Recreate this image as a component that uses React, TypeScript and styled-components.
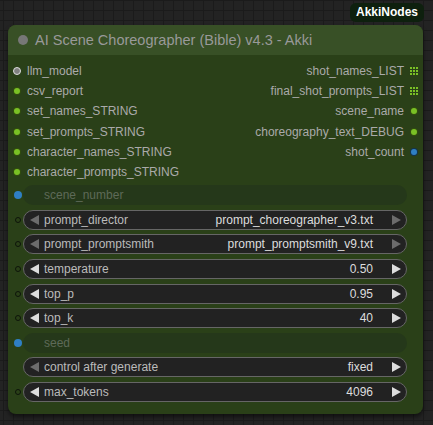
import React from "react";
import styled, { createGlobalStyle } from "styled-components";

const Global = createGlobalStyle`
  html, body { margin: 0; padding: 0; background: #222; }
  body { font-family: "Liberation Sans", Arial, sans-serif; }
`;

const Canvas = styled.div`
  position: relative;
  width: 433px;
  height: 425px;
  overflow: hidden;
  box-sizing: border-box;
  padding: 25px 10px 0 8px;
  background-color: #232323;
  background-image:
    linear-gradient(#1b1b1b 1px, transparent 1px),
    linear-gradient(90deg, #1b1b1b 1px, transparent 1px);
  background-size: 10px 10px;
  background-position: 3px 0px;
`;

const Badge = styled.div`
  position: absolute;
  top: 3px;
  left: 350px;
  height: 19px;
  padding: 0 6px;
  border-radius: 6px;
  background: #0e200e;
  color: #fff;
  font-size: 12px;
  font-weight: bold;
  line-height: 19px;
`;

const Node = styled.div`
  width: 415px;
  border-radius: 8px;
  background: #2a4018;
  box-shadow: 0 3px 4px rgba(0, 0, 0, 0.5);
  overflow: hidden;
`;

const Title = styled.div`
  height: 30px;
  background: #385026;
  display: flex;
  align-items: center;
  padding-left: 10px;
  gap: 7px;
  color: #999;
  font-size: 14.5px;
`;

const TitleDot = styled.span`
  width: 10px;
  height: 10px;
  border-radius: 50%;
  background: #777;
`;

const Body = styled.div`
  padding: 6px 16px 12px 0;
  display: flex;
  flex-direction: column;
`;

const Slots = styled.div`
  display: flex;
  justify-content: space-between;
  margin-bottom: 3px;
`;

const Column = styled.div<{ $right?: boolean }>`
  display: flex;
  flex-direction: column;
  align-items: ${(p) => (p.$right ? "flex-end" : "flex-start")};
  margin-right: ${(p) => (p.$right ? "-11px" : "0")};
`;

const SlotRow = styled.div<{ $right?: boolean }>`
  height: 20.2px;
  display: flex;
  align-items: center;
  flex-direction: ${(p) => (p.$right ? "row-reverse" : "row")};
  gap: 6px;
  padding-left: ${(p) => (p.$right ? "0" : "5px")};
  color: #aaa;
  font-size: 12px;
`;

const Dot = styled.span<{ $color: string; $ring?: boolean }>`
  width: 8px;
  height: 8px;
  border-radius: 50%;
  background: ${(p) => p.$color};
  box-sizing: border-box;
  border: ${(p) => (p.$ring ? "1.5px solid #ddd" : "1px solid rgba(0,0,0,0.6)")};
  flex: none;
`;

const GridIcon = styled.span`
  width: 8px;
  height: 8px;
  display: grid;
  grid-template-columns: repeat(3, 2px);
  grid-template-rows: repeat(3, 2px);
  gap: 1px;
  flex: none;
  & > i {
    background: #7ac025;
  }
`;

const Widgets = styled.div`
  display: flex;
  flex-direction: column;
  gap: 4.6px;
`;

const WidgetRow = styled.div`
  display: flex;
  align-items: center;
  height: 20px;
`;

const SlotHole = styled.span<{ $kind: "hole" | "blue" | "none" }>`
  width: 30px;
  flex: none;
  display: flex;
  justify-content: flex-start;
  padding-left: 6px;
  box-sizing: border-box;
  & > span {
    width: ${(p) => (p.$kind === "blue" ? "8px" : "6px")};
    height: ${(p) => (p.$kind === "blue" ? "8px" : "6px")};
    margin-left: ${(p) => (p.$kind === "blue" ? "0" : "1px")};
    border-radius: 50%;
    box-sizing: border-box;
    background: ${(p) => (p.$kind === "blue" ? "#2f7fc4" : "transparent")};
    border: ${(p) => (p.$kind === "hole" ? "1.2px solid #0d140a" : "none")};
    visibility: ${(p) => (p.$kind === "none" ? "hidden" : "visible")};
  }
`;

const Widget = styled.div<{ $disabled?: boolean }>`
  flex: 1;
  height: 20px;
  margin-left: -15px;
  box-sizing: border-box;
  border-radius: 10px;
  background: ${(p) => (p.$disabled ? "#25381a" : "#222")};
  border: 1px solid ${(p) => (p.$disabled ? "transparent" : "#666")};
  display: flex;
  align-items: center;
  padding: 0 5px 0 6px;
  font-size: 12px;
  color: ${(p) => (p.$disabled ? "#5e6a58" : "#bbb")};
`;

const Arrow = styled.span<{ $dir: "l" | "r"; $dim?: boolean }>`
  width: 0;
  height: 0;
  flex: none;
  border-top: 5px solid transparent;
  border-bottom: 5px solid transparent;
  ${(p) =>
    p.$dir === "l"
      ? `border-right: 9px solid ${p.$dim ? "#6c6c6c" : "#ddd"};`
      : `border-left: 9px solid ${p.$dim ? "#6c6c6c" : "#ddd"};`}
`;

const Label = styled.span<{ $indent?: boolean }>`
  flex: 1;
  padding-left: ${(p) => (p.$indent ? "14px" : "5px")};
  white-space: nowrap;
`;

const Value = styled.span`
  color: #ddd;
  padding-right: 19px;
  white-space: nowrap;
`;

const inputs = [
  { name: "llm_model", color: "#808080", ring: true },
  { name: "csv_report", color: "#7ac025" },
  { name: "set_names_STRING", color: "#7ac025" },
  { name: "set_prompts_STRING", color: "#7ac025" },
  { name: "character_names_STRING", color: "#7ac025" },
  { name: "character_prompts_STRING", color: "#7ac025" },
];

const outputs: { name: string; kind: "grid" | "green" | "blue" }[] = [
  { name: "shot_names_LIST", kind: "grid" },
  { name: "final_shot_prompts_LIST", kind: "grid" },
  { name: "scene_name", kind: "green" },
  { name: "choreography_text_DEBUG", kind: "green" },
  { name: "shot_count", kind: "blue" },
];

type W = {
  label: string;
  value?: string;
  slot: "hole" | "blue" | "none";
  disabled?: boolean;
  dim?: boolean;
  dimRight?: boolean;
};

const widgets: W[] = [
  { label: "scene_number", slot: "blue", disabled: true },
  { label: "prompt_director", value: "prompt_choreographer_v3.txt", slot: "hole", dim: true, dimRight: true },
  { label: "prompt_promptsmith", value: "prompt_promptsmith_v9.txt", slot: "hole", dim: true, dimRight: true },
  { label: "temperature", value: "0.50", slot: "hole" },
  { label: "top_p", value: "0.95", slot: "hole" },
  { label: "top_k", value: "40", slot: "hole" },
  { label: "seed", slot: "blue", disabled: true },
  { label: "control after generate", value: "fixed", slot: "none", dim: true },
  { label: "max_tokens", value: "4096", slot: "hole" },
];

export default function App() {
  return (
    <>
      <Global />
      <Canvas>
        <Badge>AkkiNodes</Badge>
        <Node>
          <Title>
            <TitleDot />
            <span>AI Scene Choreographer (Bible) v4.3 - Akki</span>
          </Title>
          <Body>
            <Slots>
              <Column>
                {inputs.map((i) => (
                  <SlotRow key={i.name}>
                    <Dot $color={i.color} $ring={i.ring} />
                    <span>{i.name}</span>
                  </SlotRow>
                ))}
              </Column>
              <Column $right>
                {outputs.map((o) => (
                  <SlotRow key={o.name} $right>
                    {o.kind === "grid" ? (
                      <GridIcon>
                        {Array.from({ length: 9 }).map((_, k) => (
                          <i key={k} />
                        ))}
                      </GridIcon>
                    ) : (
                      <Dot $color={o.kind === "blue" ? "#2f7fc4" : "#7ac025"} />
                    )}
                    <span>{o.name}</span>
                  </SlotRow>
                ))}
              </Column>
            </Slots>
            <Widgets>
              {widgets.map((w) => (
                <WidgetRow key={w.label}>
                  <SlotHole $kind={w.slot}>
                    <span />
                  </SlotHole>
                  <Widget $disabled={w.disabled}>
                    {!w.disabled && <Arrow $dir="l" $dim={w.dim} />}
                    <Label $indent={w.disabled}>{w.label}</Label>
                    {w.value && <Value>{w.value}</Value>}
                    {!w.disabled && <Arrow $dir="r" $dim={w.dimRight} />}
                  </Widget>
                </WidgetRow>
              ))}
            </Widgets>
          </Body>
        </Node>
      </Canvas>
    </>
  );
}
